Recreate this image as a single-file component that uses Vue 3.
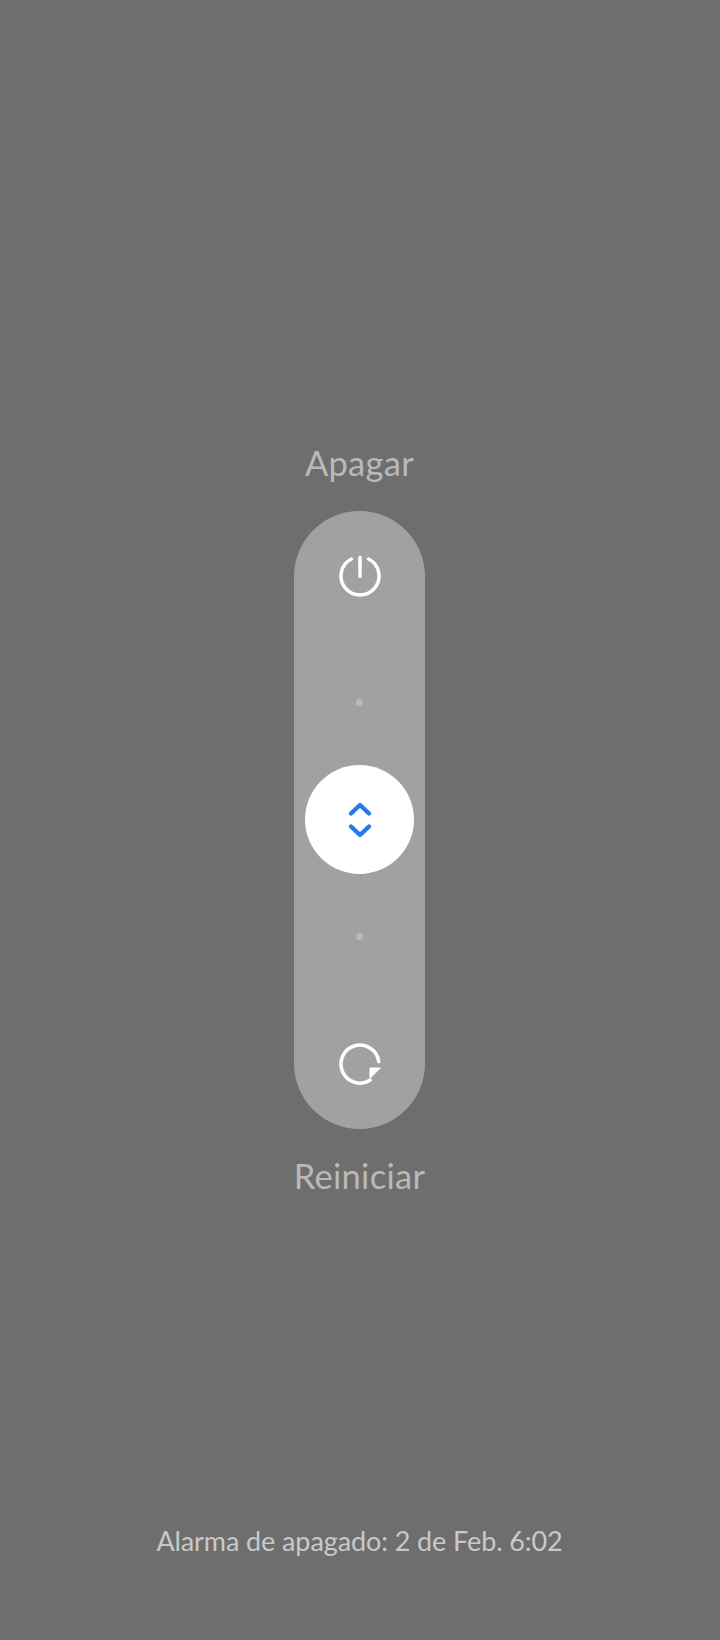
<template>
  <div class="screen">
    <div class="center">
      <p class="label">Apagar</p>
      <div class="slider">
        <svg class="action" width="44" height="44" viewBox="0 0 44 44" fill="none" stroke="#fff" stroke-width="3.5" stroke-linecap="round">
          <path d="M13.4 5A19 19 0 1 0 30.6 5" />
          <path d="M22 3.5v19" />
        </svg>
        <span class="dot dot-top"></span>
        <div class="knob">
          <svg width="26" height="40" viewBox="0 0 26 40" fill="none" stroke="#2b78ea" stroke-width="4.4" stroke-linecap="round" stroke-linejoin="round">
            <path d="M4 13.5L13 5l9 8.5" />
            <path d="M4 26.5L13 35l9-8.5" />
          </svg>
        </div>
        <span class="dot"></span>
        <svg class="action action-bottom" width="44" height="44" viewBox="0 0 44 44" fill="none" stroke="#fff" stroke-width="3.5" stroke-linecap="round">
          <path d="M40.8 19.5A19 19 0 1 0 32 38.2" />
          <path d="M42 26H32v10z" fill="#fff" stroke-width="1" stroke-linejoin="round" />
        </svg>
      </div>
      <p class="label label-bottom">Reiniciar</p>
    </div>
    <p class="alarm">Alarma de apagado: 2 de Feb. 6:02</p>
  </div>
</template>

<script setup>
</script>

<style>
html, body {
  margin: 0;
  background: #6e6e6e;
}
</style>

<style scoped>
.screen {
  width: 720px;
  height: 1640px;
  padding-right: 1px;
  box-sizing: border-box;
  background: #6e6e6e;
  display: flex;
  flex-direction: column;
  align-items: center;
  font-family: Lato, "Noto Sans", sans-serif;
  overflow: hidden;
}

.center {
  display: flex;
  flex-direction: column;
  align-items: center;
  margin-top: 441px;
}

.label {
  margin: 0;
  font-size: 34.5px;
  line-height: 44px;
  letter-spacing: 0.3px;
  color: #b9b9b9;
}

.label-bottom {
  margin-top: 1px;
}

.slider {
  width: 131px;
  height: 618px;
  margin: 26px 0 24px;
  border-radius: 66px;
  background: #a1a1a1;
  display: flex;
  flex-direction: column;
  align-items: center;
  padding: 43px 0;
  box-sizing: border-box;
}

.action {
  flex-shrink: 0;
}

.dot {
  width: 7px;
  height: 7px;
  border-radius: 50%;
  background: #b9b9b9;
  flex-shrink: 0;
}

.dot-top {
  margin-top: 101px;
}

.action-bottom {
  margin-top: 102px;
}

.knob {
  width: 109px;
  height: 109px;
  margin: 59px 0;
  border-radius: 50%;
  background: #fff;
  display: flex;
  align-items: center;
  justify-content: center;
  flex-shrink: 0;
}

.alarm {
  margin: 325px 0 0;
  font-size: 27px;
  line-height: 36px;
  letter-spacing: -0.1px;
  color: #c9c9c9;
}
</style>
